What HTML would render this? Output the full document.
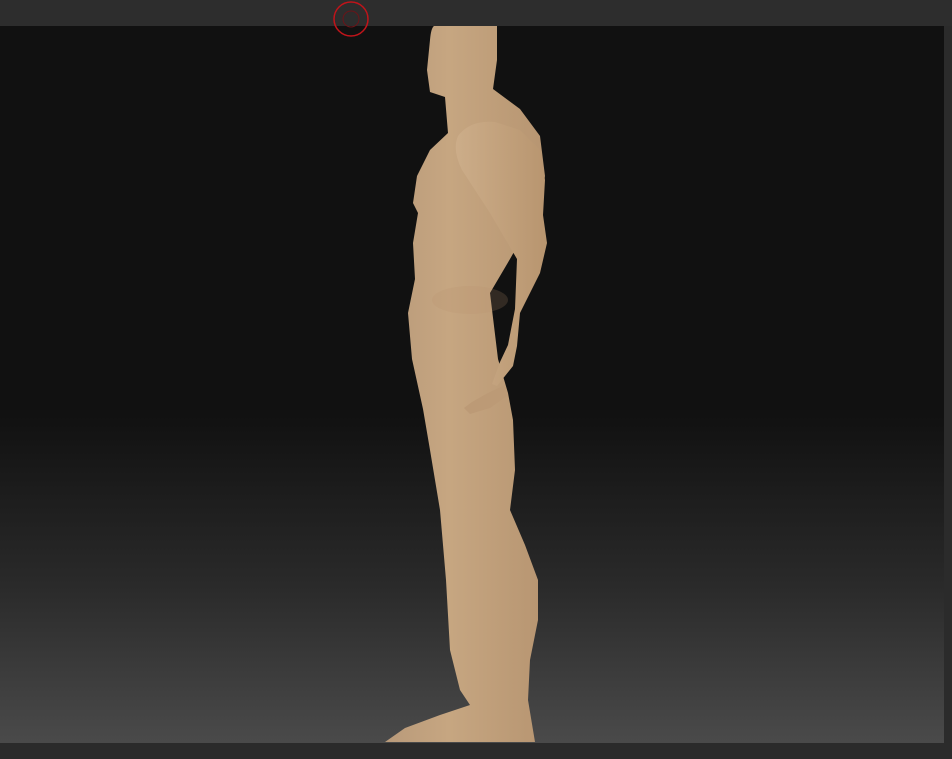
<!DOCTYPE html>
<html><head><style>
html,body{margin:0;padding:0;width:952px;height:759px;overflow:hidden;background:#2b2b2b;font-family:"Liberation Sans",sans-serif}
#top{position:absolute;left:0;top:0;width:952px;height:26px;background:#2d2d2d}
#vp{position:absolute;left:0;top:26px;width:944px;height:717px;background:linear-gradient(#111 0px,#111 390px,#2a2a2a 560px,#4a4a4a 717px)}
svg{position:absolute;left:0;top:0}
</style></head><body>
<div id="top"></div>
<div id="vp"></div>
<svg width="952" height="759" viewBox="0 0 952 759">
<defs>
<linearGradient id="sk" x1="0" x2="1" y1="0" y2="0">
<stop offset="0" stop-color="#b99a7a"/><stop offset="0.4" stop-color="#c6a681"/><stop offset="1" stop-color="#b79571"/>
</linearGradient>
<linearGradient id="ar" x1="0" x2="1">
<stop offset="0" stop-color="#ccad89"/><stop offset="1" stop-color="#b8956f"/>
</linearGradient>
</defs>
<path fill="url(#sk)" d="M434,26 L497,26 L497,60 L493,89 L520,109 L540,136 L545,176 L540,206 L510,259 L490,293 L498,359 L508,393 L513,420 L515,470 L510,510 L525,545 L538,580 L538,620 L530,660 L528,700 L535,742 L385,742 L405,728 L440,715 L470,705 L460,690 L450,650 L446,580 L440,510 L430,450 L423,409 L412,359 L408,313 L415,279 L413,243 L418,213 L413,203 L417,176 L430,150 L448,133 L445,97 L430,92 L427,70 L430,40 Q431,28 434,26 Z"/>
<path fill="url(#ar)" d="M458,136 Q470,120 495,122 L520,130 L540,150 L545,180 L543,215 L547,243 L540,273 L520,313 L517,346 L513,366 L497,386 L492,384 L500,362 L508,345 L515,309 L517,259 L490,213 L462,170 Q452,150 458,136 Z"/>
<path fill="#bc9a76" d="M488,393 L505,385 L508,395 L490,408 L470,414 L464,408 L472,402 Z"/>
<ellipse cx="470" cy="300" rx="38" ry="14" fill="#b8936e" opacity="0.2"/>
<circle cx="351" cy="19" r="17" fill="none" stroke="#c0141a" stroke-width="1.5"/>
<circle cx="351" cy="19" r="8" fill="none" stroke="#6a1418" stroke-width="1"/>
</svg>
</body></html>
